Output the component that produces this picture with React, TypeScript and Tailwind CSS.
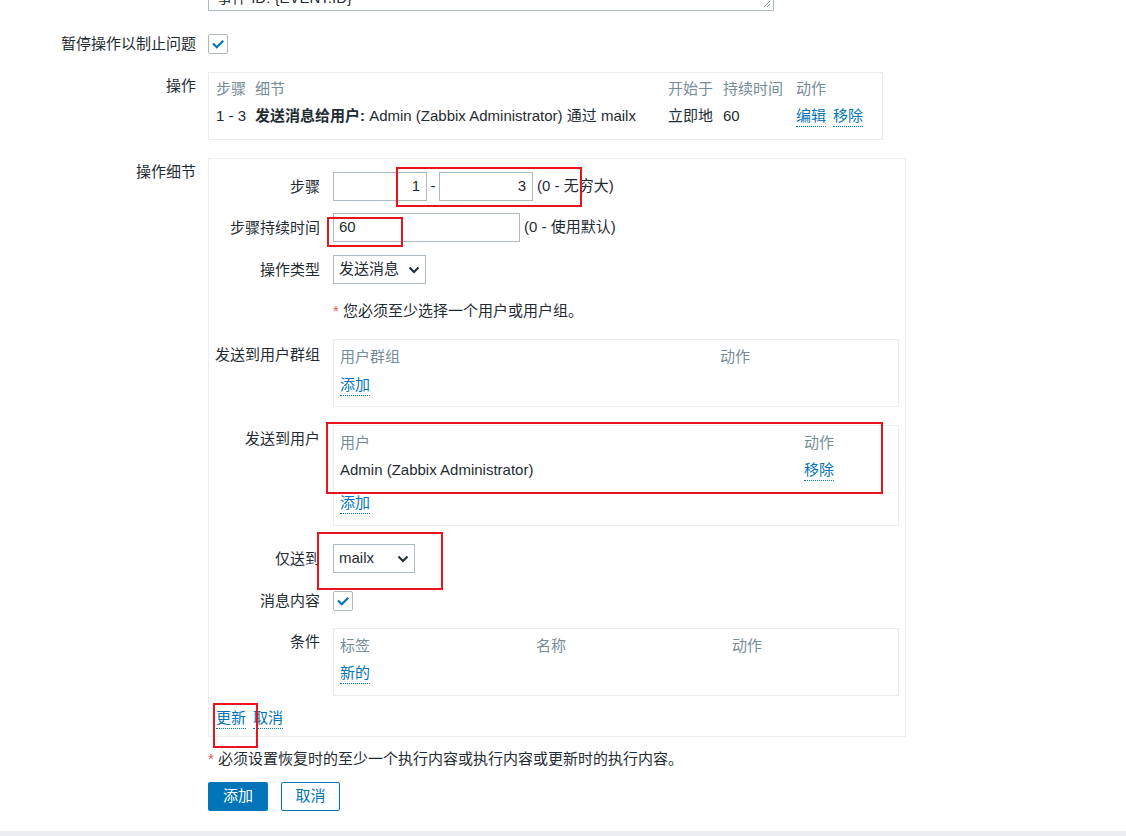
import React from 'react';

const Link: React.FC<{ children: React.ReactNode }> = ({ children }) => (
  <span className="inline-block leading-[20px] text-[#0275b8] border-b border-dotted border-[#0275b8] cursor-pointer">
    {children}
  </span>
);

const Checkbox: React.FC = () => (
  <div className="w-[20px] h-[20px] border border-[#acbbc2] rounded-[2px] bg-white flex items-center justify-center">
    <svg width="14" height="14" viewBox="0 0 14 14">
      <polyline points="2,6.5 5.8,10.2 12.2,3.8" fill="none" stroke="#0275b8" strokeWidth="2.2" />
    </svg>
  </div>
);

const Chevron: React.FC = () => (
  <svg width="12" height="8" viewBox="0 0 12 8">
    <polyline points="1.5,1.5 6,6 10.5,1.5" fill="none" stroke="#1f2c33" strokeWidth="2" />
  </svg>
);

const Select: React.FC<{ value: string; width: string }> = ({ value, width }) => (
  <div className={`${width} h-[29px] border border-[#acbbc2] flex items-center justify-between pl-[5px] pr-[5px]`}>
    <span>{value}</span>
    <Chevron />
  </div>
);

// inner form row of the detail box
const Row: React.FC<{ label?: string; className?: string; children: React.ReactNode }> = ({ label, className, children }) => (
  <div className={`flex ${className ?? ''}`}>
    <div className="w-[104px] shrink-0 text-right leading-[20px] whitespace-nowrap flex justify-end">{label}</div>
    <div className="ml-[13px] flex items-center">{children}</div>
  </div>
);

const RedBox: React.FC<{ className: string }> = ({ className }) => (
  <div className={`absolute border-2 border-[#e8141e] pointer-events-none ${className}`} />
);

export default function App() {
  return (
    <div className="relative w-[1126px] h-[836px] overflow-hidden bg-white flex flex-col font-['Liberation_Sans','Noto_Sans_CJK_SC',sans-serif] text-[15px] text-[#1f2c33]">
      {/* Textarea (scrolled out of view) */}
      <div className="flex">
        <div className="w-[196px] shrink-0" />
        <div className="ml-[12px] w-[566px] h-[60px] -mt-[49px] border border-[#acbbc2] relative px-[8px] pb-[3px] flex flex-col justify-end leading-[18px]">
          <div>主机: {'{HOST.NAME}'}</div>
          <div>事件 ID: {'{EVENT.ID}'}</div>
          <svg className="absolute right-[2px] bottom-[2px]" width="8" height="8" viewBox="0 0 8 8">
            <line x1="7" y1="1" x2="1" y2="7" stroke="#8a9599" strokeWidth="1" />
            <line x1="7" y1="4" x2="4" y2="7" stroke="#8a9599" strokeWidth="1" />
          </svg>
        </div>
      </div>

      {/* Pause operations */}
      <div className="mt-[23px] flex items-center h-[20px]">
        <div className="w-[196px] shrink-0 text-right leading-[20px]">暂停操作以制止问题</div>
        <div className="ml-[12px]">
          <Checkbox />
        </div>
      </div>

      {/* Operations */}
      <div className="mt-[18px] flex items-start">
        <div className="w-[196px] shrink-0 text-right leading-[20px] pt-[4px]">操作</div>
        <div className="ml-[12px] w-[675px] border border-[#ebeef0] px-[7px] pt-[4px] pb-[11px]">
          <div className="h-[24px] flex items-center text-[#768d99]">
            <div className="w-[39px]">步骤</div>
            <div className="w-[413px]">细节</div>
            <div className="w-[55px]">开始于</div>
            <div className="w-[73px]">持续时间</div>
            <div>动作</div>
          </div>
          <div className="mt-[3px] h-[24px] flex items-center">
            <div className="w-[39px]">1 - 3</div>
            <div className="w-[413px]">
              <span className="font-bold">发送消息给用户:</span> Admin (Zabbix Administrator) 通过 mailx
            </div>
            <div className="w-[55px]">立即地</div>
            <div className="w-[73px]">60</div>
            <div className="flex gap-[7px]">
              <Link>编辑</Link>
              <Link>移除</Link>
            </div>
          </div>
        </div>
      </div>

      {/* Operation details */}
      <div className="mt-[18px] flex items-start">
        <div className="w-[196px] shrink-0 text-right leading-[20px] pt-[4px]">操作细节</div>
        <div className="ml-[12px] w-[698px] border border-[#ebeef0] px-[7px] pt-[13px] pb-[3px]">
          <Row label="步骤" className="h-[29px] items-center">
            <div className="w-[94px] h-[29px] border border-[#acbbc2] flex items-center justify-end pr-[6px]">1</div>
            <div className="w-[12px] text-center">-</div>
            <div className="w-[94px] h-[29px] border border-[#acbbc2] flex items-center justify-end pr-[6px]">3</div>
            <div className="ml-[4px]">(0 - 无穷大)</div>
          </Row>

          <Row label="步骤持续时间" className="mt-[12px] h-[29px] items-center">
            <div className="w-[187px] h-[29px] border border-[#acbbc2] flex items-center pl-[5px]">60</div>
            <div className="ml-[4px]">(0 - 使用默认)</div>
          </Row>

          <Row label="操作类型" className="mt-[13px] h-[29px] items-center">
            <Select value="发送消息" width="w-[93px]" />
          </Row>

          <Row className="mt-[13px] h-[29px] items-center">
            <div>
              <span className="text-[#e45959]">*</span> 您必须至少选择一个用户或用户组。
            </div>
          </Row>

          <Row label="发送到用户群组" className="mt-[13px] items-start [&>div:first-child]:pt-[6px]">
            <div className="w-[566px] border border-[#ebeef0] px-[6px] pt-[5px] pb-[9px]">
              <div className="h-[24px] flex items-center text-[#768d99]">
                <div className="w-[380px]">用户群组</div>
                <div>动作</div>
              </div>
              <div className="mt-[4px] h-[24px] flex items-center">
                <Link>添加</Link>
              </div>
            </div>
          </Row>

          <Row label="发送到用户" className="mt-[18px] items-start [&>div:first-child]:pt-[4px]">
            <div className="w-[566px] border border-[#ebeef0] px-[6px] pt-[5px] pb-[10px]">
              <div className="h-[24px] flex items-center text-[#768d99]">
                <div className="w-[464px]">用户</div>
                <div>动作</div>
              </div>
              <div className="mt-[3px] h-[24px] flex items-center">
                <div className="w-[464px]">Admin (Zabbix Administrator)</div>
                <Link>移除</Link>
              </div>
              <div className="mt-[9px] h-[24px] flex items-center">
                <Link>添加</Link>
              </div>
            </div>
          </Row>

          <Row label="仅送到" className="mt-[18px] h-[29px] items-center">
            <Select value="mailx" width="w-[82px]" />
          </Row>

          <Row label="消息内容" className="mt-[13px] h-[29px] items-center">
            <Checkbox />
          </Row>

          <Row label="条件" className="mt-[13px] items-start [&>div:first-child]:pt-[4px]">
            <div className="w-[566px] border border-[#ebeef0] px-[6px] pt-[5px] pb-[10px]">
              <div className="h-[24px] flex items-center text-[#768d99]">
                <div className="w-[196px]">标签</div>
                <div className="w-[196px]">名称</div>
                <div>动作</div>
              </div>
              <div className="mt-[3px] h-[24px] flex items-center">
                <Link>新的</Link>
              </div>
            </div>
          </Row>

          <div className="mt-[8px] h-[29px] flex items-center gap-[7px]">
            <Link>更新</Link>
            <Link>取消</Link>
          </div>
        </div>
      </div>

      {/* Footnote */}
      <div className="mt-[12px] ml-[208px] h-[20px] flex items-center leading-[20px]">
        <span className="text-[#e45959]">*</span>&nbsp;必须设置恢复时的至少一个执行内容或执行内容或更新时的执行内容。
      </div>

      {/* Buttons */}
      <div className="mt-[13px] ml-[208px] flex gap-[13px]">
        <button className="w-[60px] h-[29px] bg-[#0275b8] text-white rounded-[2px]">添加</button>
        <button className="w-[59px] h-[29px] border border-[#0275b8] text-[#0275b8] rounded-[2px] bg-white">取消</button>
      </div>

      <div className="mt-[20px] flex-1 bg-[#ebeef0]" />

      {/* Red annotation boxes */}
      <RedBox className="left-[396px] top-[167px] w-[186px] h-[40px]" />
      <RedBox className="left-[327px] top-[217px] w-[76px] h-[30px]" />
      <RedBox className="left-[326px] top-[422px] w-[557px] h-[72px]" />
      <RedBox className="left-[317px] top-[532px] w-[126px] h-[58px]" />
      <RedBox className="left-[213px] top-[703px] w-[45px] h-[45px]" />
    </div>
  );
}
